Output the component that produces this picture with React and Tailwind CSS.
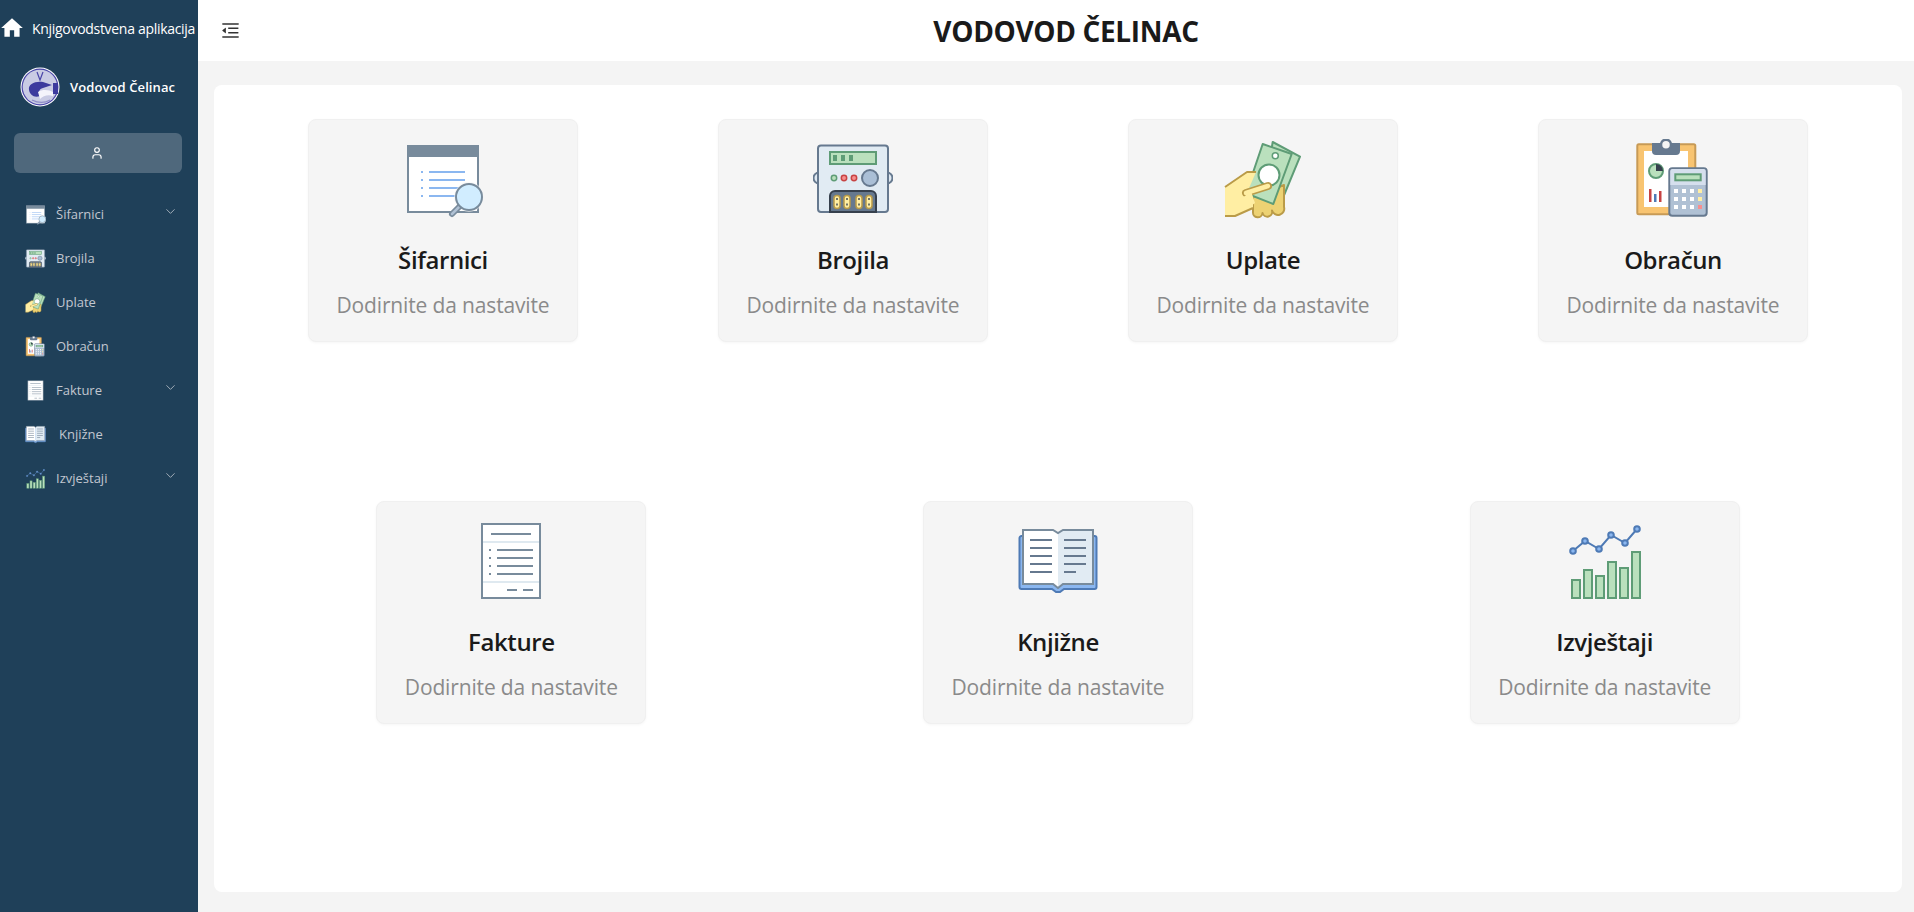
import { AiOutlineMenuFold } from "react-icons/ai";
import { MdHome } from "react-icons/md";
import { LuUser, LuChevronDown } from "react-icons/lu";

const FONT = "font-['Open_Sans','Noto_Sans',sans-serif]";

function IconSifarnici({ className }) {
  return (
    <svg viewBox="0 0 80 80" className={className}>
      <rect x="5" y="7" width="70" height="66" fill="#fff" stroke="#788b9c" strokeWidth="2" />
      <rect x="4" y="6" width="72" height="12" fill="#788b9c" />
      {[33, 41, 49, 57].map((y) => (
        <g key={y}>
          <rect x="18" y={y - 1} width="2" height="2" fill="#8bb7f0" />
          <rect x="26" y={y - 1} width="36" height="2" fill="#8bb7f0" />
        </g>
      ))}
      <circle cx="66" cy="58" r="15" fill="#f5f5f5" opacity="0.6" />
      <path d="M58 66 L49 75" stroke="#788b9c" strokeWidth="6" strokeLinecap="round" />
      <path d="M58 66 L49 75" stroke="#b0c1d4" strokeWidth="2.5" strokeLinecap="round" />
      <circle cx="66" cy="58" r="13" fill="#d1edff" stroke="#788b9c" strokeWidth="2" />
    </svg>
  );
}

function IconBrojila({ className }) {
  return (
    <svg viewBox="0 0 80 80" className={className}>
      <circle cx="6" cy="39" r="5.5" fill="#dfe9f2" stroke="#66798f" strokeWidth="2" />
      <circle cx="74" cy="39" r="5.5" fill="#dfe9f2" stroke="#66798f" strokeWidth="2" />
      <circle cx="6" cy="39" r="1.3" fill="#66798f" />
      <circle cx="74" cy="39" r="1.3" fill="#66798f" />
      <rect x="5" y="6.5" width="70" height="66.5" rx="3" fill="#e1ebf3" stroke="#66798f" strokeWidth="2" />
      <rect x="17" y="13" width="46" height="12" fill="#bae0bd" stroke="#5e9c76" strokeWidth="2" />
      {[20, 28, 36].map((x) => (
        <rect key={x} x={x} y="16" width="4" height="6" fill="#5e9c76" />
      ))}
      <circle cx="21" cy="39" r="2.7" fill="#bae0bd" stroke="#5e9c76" strokeWidth="1.5" />
      <circle cx="31" cy="39" r="2.7" fill="#f78f8f" stroke="#c74343" strokeWidth="1.5" />
      <circle cx="41" cy="39" r="2.7" fill="#f78f8f" stroke="#c74343" strokeWidth="1.5" />
      <circle cx="57" cy="39" r="8" fill="#aabfd6" stroke="#66798f" strokeWidth="2" />
      <path d="M17 73 V57 a5 5 0 0 1 5 -5 H58 a5 5 0 0 1 5 5 V73 Z" fill="#66798f" stroke="#36404d" strokeWidth="2" />
      {[24, 34, 46, 56].map((x) => (
        <g key={x}>
          <rect x={x - 3} y="56.5" width="6" height="13" rx="3" fill="#ffeea3" stroke="#ba9b48" strokeWidth="1.5" />
          <rect x={x - 0.7} y="59" width="1.4" height="2" fill="#36404d" />
          <rect x={x - 0.7} y="64.5" width="1.4" height="2" fill="#36404d" />
        </g>
      ))}
    </svg>
  );
}

function IconUplate({ className }) {
  return (
    <svg viewBox="0 0 80 80" className={className}>
      {/* zadnja novcanica */}
      <path d="M49.7 3 L77 17.7 L55.3 70 L40 62 Z" fill="#bae0bd" stroke="#5e9c76" strokeWidth="2" strokeLinejoin="round" />
      {/* prsti */}
      <path d="M30 58 V73 a4.5 4.5 0 0 0 9.5 1 a4.5 4.5 0 0 0 9.5 -2.5 a4.5 4.5 0 0 0 12 -3.5 V46 Z" fill="#edd273" stroke="#ba9b48" strokeWidth="2" strokeLinejoin="round" />
      <path d="M39.7 5 L68.7 15 L50.3 65 L23 54.3 Z" fill="#bae0bd" stroke="#5e9c76" strokeWidth="2" strokeLinejoin="round" />
      <circle cx="46" cy="36" r="10.5" fill="#fff" stroke="#5e9c76" strokeWidth="2" />
      <circle cx="52.3" cy="16.7" r="3" fill="#fff" stroke="#5e9c76" strokeWidth="1.5" />
      {/* dlan */}
      <path d="M2 48 L24 33 H33 L24 54 L30 60 V69 L12 77 H2 Z" fill="#ffeea3" />
      <path d="M2 48 L24 33 H33 M2 77 H12 L30 69" fill="none" stroke="#ba9b48" strokeWidth="2" strokeLinejoin="round" />
      <path d="M23 54 L45 47" stroke="#ba9b48" strokeWidth="8" strokeLinecap="round" />
      <path d="M23 54 L45 47" stroke="#ffeea3" strokeWidth="4.5" strokeLinecap="round" />
      <path d="M16 62 L28 52 L32 64 L24 70 Z" fill="#ffeea3" />
    </svg>
  );
}

function IconObracun({ className }) {
  return (
    <svg viewBox="0 0 80 80" className={className}>
      <rect x="4.3" y="5.3" width="58" height="70" rx="1.5" fill="#f8c471" stroke="#c79a56" strokeWidth="2" />
      <rect x="11" y="12" width="44" height="56" fill="#fff" />
      <path d="M19 4 H47 V12 a4 4 0 0 1 -4 4 H23 a4 4 0 0 1 -4 -4 Z" fill="#66798f" />
      <circle cx="33" cy="5.7" r="5" fill="#f4f4f4" stroke="#66798f" strokeWidth="2.5" />
      <circle cx="23" cy="32" r="7" fill="#bae0bd" stroke="#5e9c76" strokeWidth="2" />
      <path d="M23 25 A7 7 0 0 1 30 32 H23 Z" fill="#36404d" />
      <rect x="16" y="50" width="2.5" height="13" fill="#c74343" />
      <rect x="21" y="55" width="2.5" height="8" fill="#4e7ab5" />
      <rect x="26" y="52" width="2.5" height="11" fill="#c74343" />
      <rect x="36.3" y="29.3" width="37.4" height="47.4" rx="3" fill="#b0c1d4" stroke="#66798f" strokeWidth="2" />
      <path d="M37.3 46 V32 a2 2 0 0 1 2 -2 H70.7 a2 2 0 0 1 2 2 V46 Z" fill="#d5dfed" />
      <rect x="42.3" y="35.3" width="25.4" height="6" fill="#bae0bd" stroke="#5e9c76" strokeWidth="2" />
      {[52, 60, 68].map((y) =>
        [43, 51, 59, 67].map((x) => (
          <rect
            key={`${x}-${y}`}
            x={x - 2}
            y={y - 2}
            width="4"
            height="4"
            fill={x === 67 ? (y === 68 ? "#f78f8f" : "#ffeea3") : "#fff"}
          />
        ))
      )}
    </svg>
  );
}

function IconFakture({ className }) {
  return (
    <svg viewBox="0 0 80 80" className={className}>
      <rect x="11" y="3" width="58" height="74" fill="#fff" stroke="#788b9c" strokeWidth="2" />
      <rect x="12" y="20" width="56" height="2" fill="#dfe9f0" />
      <rect x="12" y="60" width="56" height="2" fill="#dfe9f0" />
      <rect x="20" y="12" width="40" height="2" fill="#788b9c" />
      {[29, 37, 45, 53].map((y) => (
        <g key={y}>
          <rect x="18" y={y - 1} width="2" height="2" fill="#788b9c" />
          <rect x="26" y={y - 1} width="36" height="2" fill="#788b9c" />
        </g>
      ))}
      <rect x="36" y="68" width="10" height="2" fill="#788b9c" />
      <rect x="52" y="68" width="10" height="2" fill="#788b9c" />
    </svg>
  );
}

function IconKnjizne({ className }) {
  return (
    <svg viewBox="0 0 80 80" className={className}>
      <path d="M1.5 17 a2 2 0 0 1 2 -2 H76.5 a2 2 0 0 1 2 2 V66 a2 2 0 0 1 -2 2 H46 L42 71 H38 L34 68 H3.5 a2 2 0 0 1 -2 -2 Z" fill="#8bb7f0" stroke="#4e7ab5" strokeWidth="2" />
      <path d="M5 9 H34 L40 12 V67 L34 63 H5 Z" fill="#fff" />
      <path d="M75 9 H46 L40 12 V67 L46 63 H75 Z" fill="#e1ebf3" />
      <path d="M5 9 H35 L40 12 L45 9 H75 V63 H45 L40 67 L35 63 H5 Z" fill="none" stroke="#788b9c" strokeWidth="2" />
      {[19, 27, 35, 43, 51].map((y) => (
        <g key={y}>
          <rect x="12" y={y - 1} width="22" height="2" fill="#66798f" />
          <rect x="46" y={y - 1} width={y === 51 ? 12 : 22} height="2" fill="#66798f" />
        </g>
      ))}
    </svg>
  );
}

function IconIzvjestaji({ className }) {
  return (
    <svg viewBox="0 0 80 80" className={className}>
      <path d="M8 30 L20 20 L34 28 L46 14 L60 22 L72 8" fill="none" stroke="#4e7ab5" strokeWidth="2" />
      {[[8, 30], [20, 20], [34, 28], [46, 14], [60, 22], [72, 8]].map(([x, y]) => (
        <circle key={x} cx={x} cy={y} r="2.8" fill="#8bb7f0" stroke="#4e7ab5" strokeWidth="2" />
      ))}
      {[[7, 59], [19, 49], [31, 55], [43, 41], [55, 47], [67, 31]].map(([x, y]) => (
        <rect key={x} x={x} y={y} width="8" height={77 - y} fill="#bae0bd" stroke="#5e9c76" strokeWidth="2" />
      ))}
    </svg>
  );
}

function Logo() {
  return (
    <svg viewBox="0 0 40 40" className="w-10 h-10 shrink-0">
      <circle cx="20" cy="20" r="19.5" fill="#fff" />
      <circle cx="20" cy="20" r="18.5" fill="#4a46a8" />
      <circle cx="20" cy="20" r="17.3" fill="#c9cbe4" />
      <path d="M17 5 L20 13 L23 5" fill="none" stroke="#4a46a8" strokeWidth="1.2" />
      <path d="M9 23 C8 17 15 14 23 15 L32 18 L23 21 C19 22 18 25 20 29 C14 31 10 28 9 23 Z" fill="#3c3a9e" />
      <path d="M18 25 C23 22 29 23 33 25 L33 29 C28 27 23 29 20 32 Z" fill="#f4f4fb" />
      <rect x="33" y="16" width="5" height="11" fill="#3c3a9e" />
      <path d="M12 33 C18 36 25 36 30 33" fill="none" stroke="#8f8dc7" strokeWidth="1.2" />
    </svg>
  );
}

const MENU = [
  { label: "Šifarnici", Icon: IconSifarnici, arrow: true },
  { label: "Brojila", Icon: IconBrojila },
  { label: "Uplate", Icon: IconUplate },
  { label: "Obračun", Icon: IconObracun },
  { label: "Fakture", Icon: IconFakture, arrow: true },
  { label: "Knjižne", Icon: IconKnjizne, shifted: true },
  { label: "Izvještaji", Icon: IconIzvjestaji, arrow: true },
];

const TOP_ROW = [
  { label: "Šifarnici", Icon: IconSifarnici },
  { label: "Brojila", Icon: IconBrojila },
  { label: "Uplate", Icon: IconUplate },
  { label: "Obračun", Icon: IconObracun },
];

const BOTTOM_ROW = [
  { label: "Fakture", Icon: IconFakture },
  { label: "Knjižne", Icon: IconKnjizne },
  { label: "Izvještaji", Icon: IconIzvjestaji },
];

function Card({ label, Icon }) {
  return (
    <div className="w-[270px] h-[223px] flex flex-col items-center pt-[19px] bg-[#f5f5f5] border border-[#f0f0f0] rounded-lg shadow-[0_1px_3px_rgba(0,0,0,0.04)]">
      <Icon className="w-20 h-20 shrink-0" />
      <div className="mt-[24px] text-[24px] leading-[34px] font-semibold text-[#1a1a1a] tracking-[-0.4px]">{label}</div>
      <div className="mt-[15px] text-[21px] leading-[26px] text-[#8a8a8a] tracking-[-0.15px]">Dodirnite da nastavite</div>
    </div>
  );
}

export default function App() {
  return (
    <div className={`flex h-screen bg-[#f4f4f4] overflow-hidden ${FONT}`}>
      <aside className="w-[198px] shrink-0 bg-[#1f4059] flex flex-col">
        <div className="h-[56px] flex items-center text-white">
          <MdHome className="w-[26px] h-[26px] shrink-0 -ml-[1px]" />
          <span className="ml-[7px] text-[14px] whitespace-nowrap tracking-[-0.3px]">Knjigovodstvena aplikacija</span>
        </div>
        <div className="mt-[11px] flex items-center pl-[20px]">
          <Logo />
          <span className="ml-[10px] text-[13px] font-semibold text-white whitespace-nowrap tracking-[0.1px] translate-y-[1px]">Vodovod Čelinac</span>
        </div>
        <div className="mt-[26px] ml-[14px] mr-[16px] h-[40px] rounded-md bg-[#4f687c] flex items-center justify-center text-white">
          <LuUser className="w-[14px] h-[14px] -translate-x-[1px]" />
        </div>
        <nav className="mt-[19px] flex flex-col">
          {MENU.map(({ label, Icon, arrow, shifted }) => (
            <div key={label} className="h-[44px] flex items-center pl-[25px] pr-[20px] text-[#c2c7d0]">
              <Icon className="w-[21px] h-[21px] shrink-0" />
              <span className={`text-[13px] translate-y-[1px] ${shifted ? "ml-[13px]" : "ml-[10px]"}`}>{label}</span>
              {arrow && <LuChevronDown strokeWidth={1.5} className="ml-auto w-[15px] h-[15px] -translate-y-[3px] text-[#a9b3bd]" />}
            </div>
          ))}
        </nav>
      </aside>

      <div className="flex-1 min-w-0 flex flex-col">
        <header className="h-[61px] shrink-0 bg-white flex items-center">
          <div className="w-[60px] shrink-0 flex justify-center translate-x-[2px]">
            <AiOutlineMenuFold className="w-[21px] h-[21px] text-[#333]" />
          </div>
          <h1 className="flex-1 mr-[40px] text-center text-[28px] font-bold text-[#1a1a1a] tracking-[-0.35px]">VODOVOD ČELINAC</h1>
        </header>
        <main className="flex-1 min-h-0 mt-[24px] mb-[20px] ml-[16px] mr-[12px] bg-white rounded-lg px-[24px] pt-[34px]">
          <div className="flex justify-around">
            {TOP_ROW.map((c) => (
              <Card key={c.label} {...c} />
            ))}
          </div>
          <div className="flex justify-around mt-[159px]">
            {BOTTOM_ROW.map((c) => (
              <Card key={c.label} {...c} />
            ))}
          </div>
        </main>
      </div>
    </div>
  );
}
